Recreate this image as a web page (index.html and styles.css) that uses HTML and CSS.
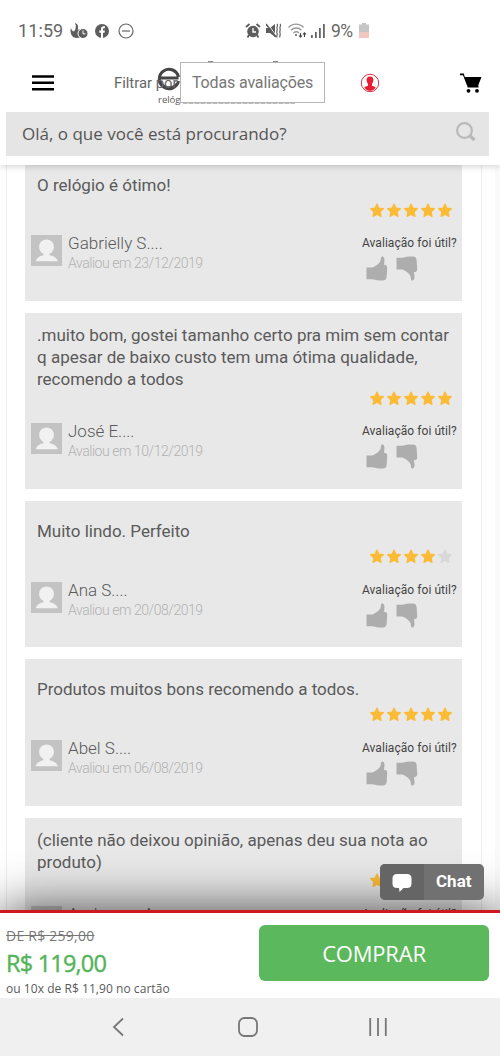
FILE: index.html
```html
<!DOCTYPE html>
<html lang="pt-BR">
<head>
<meta charset="utf-8">
<title>Avaliações</title>
<link rel="stylesheet" href="styles.css">
</head>
<body>
<svg class="defs" width="0" height="0">
  <symbol id="star" viewBox="0 0 16 16"><path d="M8 1.200l2 4.300 4.700.6-3.400 3.300.9 4.800L8 12l-4.200 2.200.9-4.800L1.300 6.100 6 5.500z" stroke-linejoin="round" stroke-width="1.400" stroke="currentColor" fill="currentColor"/></symbol>
  <symbol id="user" viewBox="0 0 30 30"><ellipse cx="15" cy="11.500" rx="7.200" ry="7.200"/><path d="M12 17h6v2.500c4 .8 7 2.500 8 6H4.500c1-3.500 3.500-5.200 7.500-6z"/></symbol>
  <symbol id="thumb" viewBox="0 0 22 25"><path d="M.5 11.500H6.500C10 10 13 8 14.500 5c.6-2 .1-4.500 1.700-4.500 2 0 2.600 2.500 2.200 5L17.900 8.700c2.600 0 3.600 1.500 3.300 4l-.6 8.300c-.2 2.500-1.600 3.500-4.100 3.500-4.500 0-7-.3-10-1.200H.5z"/></symbol>
</svg>
<div class="app">
  <header class="top">
    <div class="status">
      <span class="clock">11:59</span>
      <svg class="s-app" width="18" height="16" viewBox="0 0 18 16"><path d="M5 0c3 1 4 4 2.500 7L10 6c-2 3-2 6 1 8-4 2-8 1-9.500-2C.5 9.500 0 7 1 5c.5 2 1 3 3 3.500C6 6 6.500 3 5 0z" fill="#5d5d5d"/><circle cx="13" cy="10.500" r="5" fill="#5d5d5d" stroke="#fff"/><path d="M13 7.500v3.300h2.500" fill="none" stroke="#fff"/></svg>
      <svg class="s-fb" width="14" height="14" viewBox="0 0 14 14"><circle cx="7" cy="7" r="7" fill="#5d5d5d"/><path d="M6 14V8.700H4.300V6.500H6V5c0-1.800 1-2.700 2.700-2.700h1.200v2H9c-.7 0-1 .3-1 1v1.200h1.900l-.4 2.200H8V14z" fill="#fff"/></svg>
      <svg class="s-dnd" width="16" height="16" viewBox="0 0 16 16" fill="none" stroke="#666" stroke-width="1.200"><circle cx="8" cy="8" r="7"/><path d="M4 8h8"/></svg>
      <svg class="s-alarm" width="16" height="16" viewBox="0 0 16 16"><circle cx="8" cy="8.500" r="5.800" fill="#5d5d5d"/><path d="M1 4l3.500-3M15 4l-3.500-3M4 12l-1.500 2.500M12 12l1.500 2.500" stroke="#5d5d5d" stroke-width="1.800"/><path d="M8 5v4h3" stroke="#fff" stroke-width="1.300" fill="none"/></svg>
      <svg class="s-mute" width="16" height="16" viewBox="0 0 16 16"><path d="M0 5h4l5-4v13l-5-4H0z" fill="#5d5d5d"/><path d="M2 1l9 13" stroke="#fff" stroke-width="1"/><path d="M0 1l10 13" stroke="#5d5d5d" stroke-width="1.500"/><path d="M11 1c2 1.500-1 3 0 4.500s-1 3 0 4.500-1 3 0 4.500M14 1c2 1.500-1 3 0 4.500s-1 3 0 4.500-1 3 0 4.500" stroke="#5d5d5d" fill="none" stroke-width="1.200"/></svg>
      <svg class="s-wifi" width="19" height="16" viewBox="0 0 19 16" fill="none" stroke="#999" stroke-width="1.400"><path d="M.5 4.500c4-4.500 11-4.500 15 0M3 7.200c3-3 7.500-3 10.500 0M5.500 10c1.500-1.600 4-1.600 5.500 0"/><circle cx="8" cy="12" r="1" fill="#555" stroke="none"/><path d="M12.500 10v4M11 12.500l1.500 1.700 1.500-1.700M16.500 14v-4M15 11.500l1.500-1.700 1.500 1.700" stroke="#444" stroke-width="1.100"/></svg>
      <svg class="s-signal" width="14" height="14" viewBox="0 0 14 14" fill="#666"><path d="M0 11h1.800v3H0zM4 8h1.800v6H4zM8 4h1.800v10H8zM12 0h1.800v14H12z"/></svg>
      <span class="pct">9%</span>
      <svg class="s-batt" width="10" height="15" viewBox="0 0 10 15"><path d="M3 0h4v1.500h3V9H0V1.500h3z" fill="#c5c5c5"/><path d="M0 9h10v6H0z" fill="#f0c8bf"/></svg>
    </div>
    <div class="bar">
      <svg class="menu" width="22" height="16" viewBox="0 0 22 16"><path d="M0 1.500h22M0 7.800h22M0 14.200h22" stroke="#000" stroke-width="2.500"/></svg>
      <svg class="account" width="20" height="20" viewBox="0 0 20 20"><circle cx="10" cy="10" r="8.700" fill="#fff" stroke="#d93342" stroke-width="1"/><path d="M10 3.500c2.700 0 3.800 1.800 3.300 4.200-.3 1.600-.8 2.600-1.300 3.300v1.800c1.600.5 3.200 1 3.700 1.900A8 8 0 0 1 10 18a8 8 0 0 1-5.700-3.300c.5-.9 2.100-1.400 3.700-1.900V11C7.500 10.300 7 9.300 6.700 7.700 6.200 5.300 7.300 3.500 10 3.500z" fill="#e91c32"/></svg>
      <svg class="cart" width="22" height="20" viewBox="0 0 22 20"><path d="M0 .5h3.800l1 3.500H21.500l-3.300 8.500.5 2H7.800L3 2.300H0z"/><circle cx="8.500" cy="17.800" r="1.900"/><circle cx="17" cy="17.800" r="1.900"/></svg>
      <div class="brand">
        <svg width="24" height="24" viewBox="0 0 24 24" fill="none" stroke="#454545" stroke-width="3"><path d="M2.500 11h19M21.500 14A9.700 9.700 0 1 1 21.500 10M3 14a9.700 9.700 0 0 0 17 3"/></svg>
        <span>relóg</span>
      </div>
      <div class="filter"><span>Filtrar por</span><span class="select">Todas avaliações</span></div>
      <i class="tick t1"></i><i class="tick t2"></i><i class="tick t3"></i>
    </div>
    <div class="search"><span>Olá, o que você está procurando?</span><svg width="20" height="20" viewBox="0 0 20 20" fill="none" stroke="#b9b9b9"><circle cx="8.500" cy="8.500" r="7.400" stroke-width="2.200"/><path d="M14 14l4.500 4" stroke-width="3.500"/></svg></div>
  </header>
  <main class="page">
    <div class="reviews" id="reviews"></div>
  </main>
  <div class="chat"><span class="bubble"><svg width="20" height="20" viewBox="0 0 20 20" fill="#fff"><path d="M5 1h10q4.500 0 4.500 4.500v5Q19.500 15 15 15h-3.500L7.500 19 7 15H5Q.5 15 .5 10.500v-5Q.5 1 5 1z"/></svg></span><b>Chat</b></div>
  <section class="buy">
    <div class="prices"><s>DE R$ 259,00</s><strong>R$ 119,00</strong><small>ou 10x de R$ 11,90 no cartão</small></div>
    <button class="cta">COMPRAR</button>
  </section>
  <nav class="keys">
    <svg width="12" height="20" viewBox="0 0 12 20"><path d="M11 1.500L2 10l9 8.500"/></svg>
    <svg width="20" height="20" viewBox="0 0 20 20"><rect x="1" y="1" width="18" height="18" rx="5.500"/></svg>
    <svg width="18" height="18" viewBox="0 0 18 18"><path d="M1.200 0v18M9 0v18M16.800 0v18"/></svg>
  </nav>
</div>
<script src="reviews.js"></script>
</body>
</html>
```
FILE: styles.css
```css
* { box-sizing: border-box; }
body { margin: 0; background: #fff; font-family: Roboto, "Liberation Sans", sans-serif; color: #5a5a5a; }
svg { display: block; flex: none; }
.defs { position: absolute; }
.app { position: relative; width: 500px; height: 1056px; overflow: hidden; display: grid; grid-template-rows: 165px 745px 88px 58px; }
.top { position: relative; z-index: 2; background: #fff; box-shadow: 0 1px 7px rgba(0,0,0,.2); white-space: nowrap; }
.status { height: 61px; display: flex; align-items: center; padding-left: 18px; font-size: 18px; color: #666; }
.clock { width: 45px; margin-right: 7px; letter-spacing: .1px; }
.s-fb { margin-left: 7px; }
.s-dnd { margin-left: 9px; }
.s-alarm { margin-left: 111px; }
.s-mute { margin-left: 5px; }
.s-wifi { margin-left: 6px; }
.s-signal { margin-left: 4px; }
.pct { margin-left: 6px; width: 23px; font-size: 17.500px; letter-spacing: -.6px; }
.s-batt { margin-left: 5px; }
.bar { position: relative; height: 51px; display: flex; padding: 11px 0 0 32px; }
.menu { margin-top: 3px; }
.account { margin: 1px 0 0 306px; }
.cart { margin: 1px 0 0 80px; }
.brand { position: absolute; left: 157px; top: 6px; width: 24px; }
.brand span { display: block; font: 9.500px/13px "Open Sans", sans-serif; margin: 2px 0 0 1px; }
.filter { position: absolute; left: 114px; top: 1px; display: flex; align-items: center; gap: 2px; font-size: 14.800px; color: #666; }
.filter span:first-child { width: 64px; }
.filter .select { width: 145px; height: 41px; border: 1px solid #b5b5b5; background: #fff; padding-left: 11px; font-size: 16px; line-height: 40px; color: #777; letter-spacing: -.15px; }
.tick { position: absolute; height: 1px; background: #888; }
.t1 { left: 208px; top: 0; width: 5px; }
.t2 { left: 273px; top: 0; width: 5px; }
.t3 { left: 183px; top: 42px; width: 112px; background: repeating-linear-gradient(90deg, #bbb 0 4px, #ddd 4px 6px); }
.search { margin: 0 11px 0 6px; height: 44px; background: #e5e5e5; display: flex; align-items: flex-start; justify-content: space-between; padding: 10px 13px 0 16px; font: 17px/24px "Open Sans", sans-serif; color: #555; }
.page { overflow: hidden; background: linear-gradient(90deg, #fff 495px, #fafafa 495px); }
.reviews { width: 476px; height: 760px; margin-left: 6px; border: 1px solid #eee; border-width: 0 1px; padding: 0 19px 0 18px; display: flex; flex-direction: column; gap: 12.300px; }
.card { flex: none; background: #e8e8e8; padding: 12px 5px 20.700px 6px; }
.card:first-child { margin-top: -10px; }
.card.single { padding-top: 19.500px; }
.card p { margin: 0 0 0 6px; font-size: 17px; line-height: 21.900px; white-space: pre-line; }
.stars { display: flex; gap: 1px; justify-content: flex-end; padding-right: 4.500px; margin-top: -.5px; color: #fcbb35; }
.card.single .stars { margin-top: 6.500px; }
.stars svg { width: 16px; height: 15px; }
.stars .off { color: #d8d8d8; }
.who { display: grid; grid-template-columns: 31px 1fr 95px; column-gap: 6px; height: 49px; margin-top: 13.500px; }
.avatar { margin-top: 4px; width: 31px; height: 31px; background: #c3c3c3; }
.avatar svg { width: 31px; height: 31px; fill: #f1f1f1; }
.id { font-weight: 300; font-size: 17px; line-height: 24px; }
.id time { display: block; font-size: 14px; line-height: 17px; color: #b2b2b2; letter-spacing: -.45px; }
.useful { font-size: 12px; line-height: 24px; color: #444; white-space: nowrap; letter-spacing: .05px; }
.thumbs { display: flex; gap: 8px; padding: 1px 0 0 4px; }
.thumbs svg { width: 22px; height: 25px; fill: #adadad; }
.thumbs svg + svg { transform: scaleY(-1); }
.chat { position: absolute; z-index: 4; left: 380px; top: 864px; width: 104px; height: 36px; display: flex; border-radius: 5px; overflow: hidden; background: #717171; color: #fff; }
.bubble { width: 44px; background: #656565; padding: 9px 0 0 12px; }
.chat b { font-size: 17px; line-height: 35px; padding-left: 12px; }
.buy { position: relative; z-index: 3; background: #fff; border-top: 3px solid #cc1a20; box-shadow: 0 0 50px rgba(0,0,0,.7); display: flex; font-family: "Open Sans", sans-serif; white-space: nowrap; }
.prices { width: 259px; padding: 12px 0 0 6px; display: flex; flex-direction: column; }
.prices s { font-size: 14px; line-height: 21px; color: #777; letter-spacing: .25px; align-self: flex-start; }
.prices strong { font-size: 23.500px; font-weight: 400; line-height: 34px; color: #53b459; letter-spacing: -.8px; -webkit-text-stroke: .4px #53b459; }
.prices small { font-size: 12px; line-height: 18px; letter-spacing: .05px; }
.cta { width: 230px; height: 56px; margin-top: 12px; border: 0; border-radius: 6px; background: #5cb85c; color: #fff; font: 22px "Open Sans", sans-serif; letter-spacing: -.2px; padding: 0; }
.keys { position: relative; z-index: 4; background: #f0f0f0; display: flex; align-items: center; padding-left: 112px; fill: none; stroke: #777; stroke-width: 1.800; }
.keys svg + svg { margin-left: 114px; }
.keys svg:last-child { margin-left: 111px; }
```
FILE: reviews.js
```js
const reviews = [
  ["O relógio é ótimo!", 5, "Gabrielly S....", "23/12/2019"],
  [".muito bom, gostei tamanho certo pra mim sem contar\nq apesar de baixo custo tem uma ótima qualidade,\nrecomendo a todos", 5, "José E....", "10/12/2019"],
  ["Muito lindo. Perfeito", 4, "Ana S....", "20/08/2019"],
  ["Produtos muitos bons recomendo a todos.", 5, "Abel S....", "06/08/2019"],
  ["(cliente não deixou opinião, apenas deu sua nota ao\nproduto)", 5, "Anderson A....", "05/08/2019"]
];
document.getElementById("reviews").innerHTML = reviews.map(([text, score, name, date]) => `
<article class="card ${text.includes("\n") ? "" : "single"}">
  <p>${text}</p>
  <div class="stars">${[1, 2, 3, 4, 5].map(n => `<svg class="${n > score ? "off" : ""}"><use href="#star"/></svg>`).join("")}</div>
  <div class="who">
    <div class="avatar"><svg><use href="#user"/></svg></div>
    <div class="id">${name}<time>Avaliou em ${date}</time></div>
    <div class="useful">Avaliação foi útil?<div class="thumbs"><svg><use href="#thumb"/></svg><svg><use href="#thumb"/></svg></div></div>
  </div>
</article>`).join("");
```
